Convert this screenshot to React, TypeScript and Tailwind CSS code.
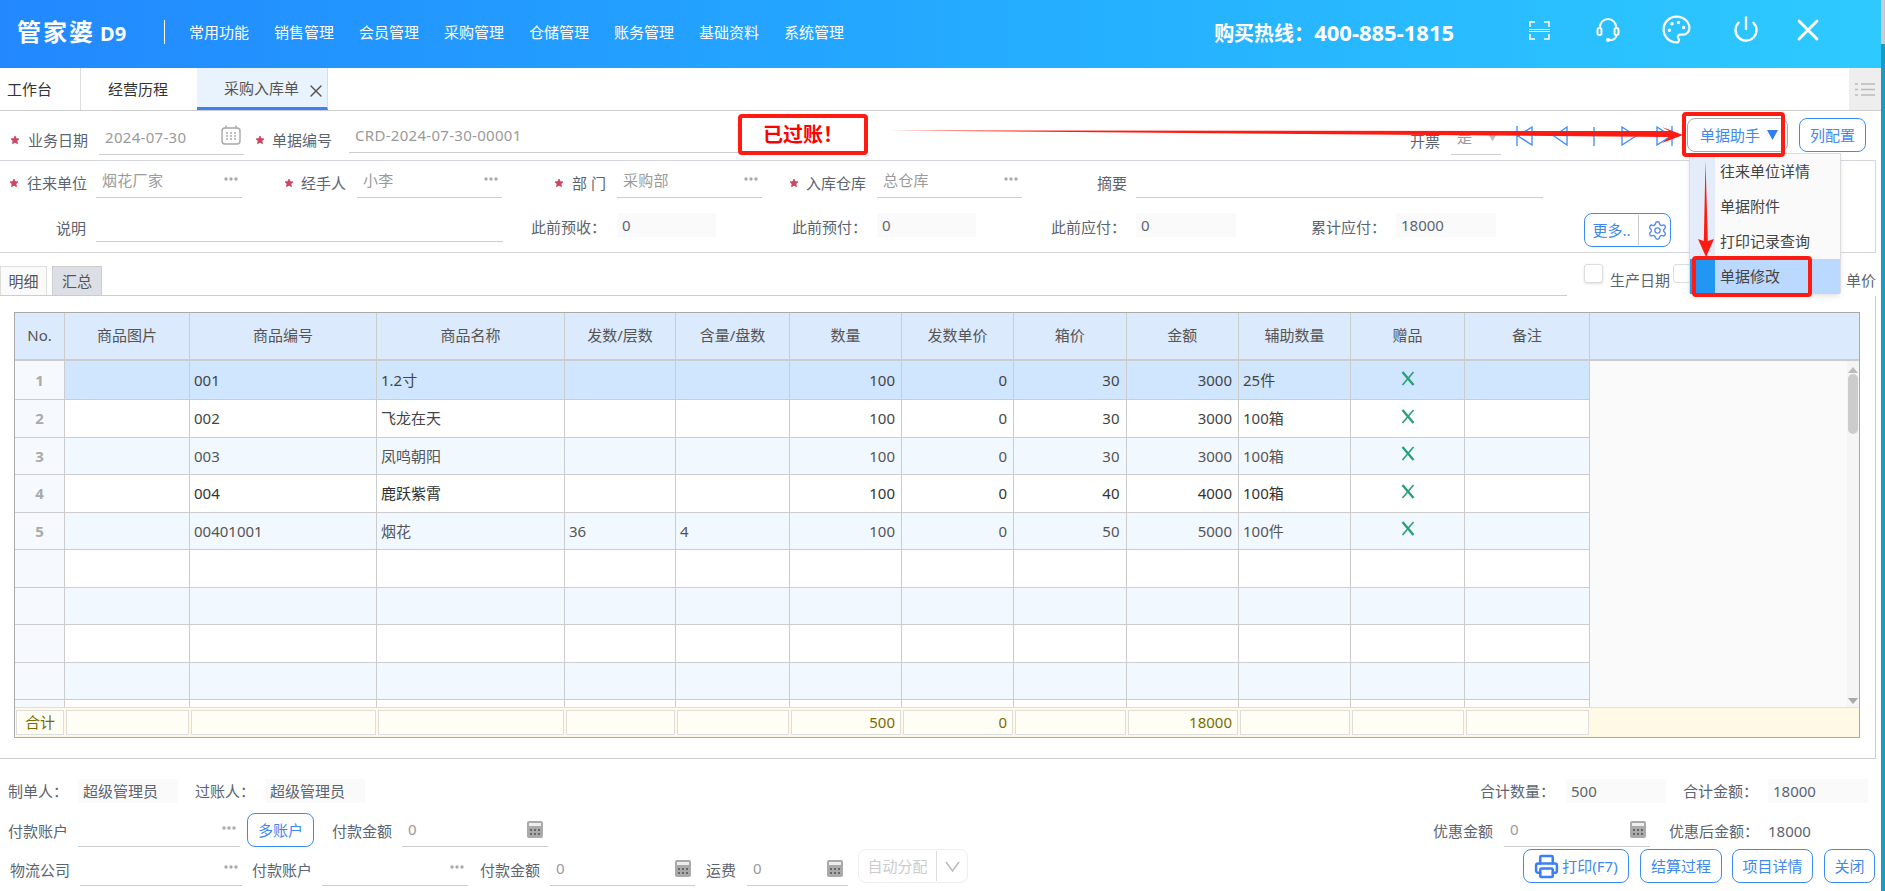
import { Palette, Power, Printer, Settings, X } from 'lucide-react'
import clsx from 'clsx'

const COLS = 'grid grid-cols-[50px_125px_187px_188px_111px_114px_112px_112px_112.5px_112.5px_112px_114px_125px]'

const HEADERS = ['No.', '商品图片', '商品编号', '商品名称', '发数/层数', '含量/盘数', '数量', '发数单价', '箱价', '金额', '辅助数量', '赠品', '备注']
const NAV = ['常用功能', '销售管理', '会员管理', '采购管理', '仓储管理', '账务管理', '基础资料', '系统管理']

const ROWS = [
  { code: '001', name: '1.2寸', a: '', b: '', price: '30', sum: '3000', aux: '25件', tone: 'text-[#444]' },
  { code: '002', name: '飞龙在天', a: '', b: '', price: '30', sum: '3000', aux: '100箱', tone: 'text-[#444]' },
  { code: '003', name: '凤鸣朝阳', a: '', b: '', price: '30', sum: '3000', aux: '100箱', tone: 'text-[#555]' },
  { code: '004', name: '鹿跃紫霄', a: '', b: '', price: '40', sum: '4000', aux: '100箱', tone: 'text-[#333]' },
  { code: '00401001', name: '烟花', a: '36', b: '4', price: '50', sum: '5000', aux: '100件', tone: 'text-[#555]' },
]

function Star() {
  return (
    <svg viewBox="0 0 10 10" className="w-[10px] h-[10px] mb-[10px] shrink-0 fill-[#cf4560] stroke-[#cf4560]" strokeWidth="0.8" strokeLinejoin="round">
      <path d="M5 1l1.2 2.6 2.8.3-2.1 1.9.6 2.9L5 7.2 2.5 8.7l.6-2.9L1 3.9l2.8-.3z" />
    </svg>
  )
}

function Lbl({ children, className }: { children: React.ReactNode; className?: string }) {
  return <div className={clsx('h-[20px] leading-[20px] text-[15px] text-[#5b6470] whitespace-nowrap shrink-0', className)}>{children}</div>
}

function Dots() {
  return (
    <svg width="14" height="4" className="shrink-0 mr-[4px] mb-[3px] fill-[#aaa]">
      <circle cx="2" cy="2" r="1.7" />
      <circle cx="7" cy="2" r="1.7" />
      <circle cx="12" cy="2" r="1.7" />
    </svg>
  )
}

function Calc() {
  return (
    <svg width="16" height="17" viewBox="0 0 16 17" className="shrink-0">
      <rect width="16" height="17" rx="2" fill="#aaa" />
      <rect x="2" y="2" width="12" height="3" fill="#eee" />
      <path d="M3 8h2v2H3zM7 8h2v2H7zM11 8h2v2h-2zM3 12h2v2H3zM7 12h2v2H7zM11 12h2v2h-2z" fill="#666" />
    </svg>
  )
}

function CalendarIcon() {
  return (
    <svg width="20" height="20" viewBox="0 0 20 20" className="shrink-0 fill-none stroke-[#a8a8a8] mb-[6px]">
      <rect x="1" y="3" width="18" height="16" rx="3" strokeWidth="1.4" />
      <path d="M5 .5v3M15 .5v3" strokeWidth="1.4" />
      <path d="M5 8h2M9 8h2M13 8h2M5 11h2M9 11h2M13 11h2M5 14h2M9 14h2M13 14h2" strokeWidth="1.5" />
    </svg>
  )
}

function Line({ value, icon, className }: { value?: string; icon?: React.ReactNode; className?: string }) {
  return (
    <div className={clsx('flex items-center justify-between h-[30px] pb-[4px] pl-[6px] border-b border-[#ccc] text-[15px] text-[#9a9a9a] shrink-0', className)}>
      <span className="whitespace-nowrap tracking-[0.3px]">{value}</span>
      {icon}
    </div>
  )
}

function ReadBox({ value, className }: { value: string; className?: string }) {
  return <div className={clsx('h-[24px] leading-[24px] px-[5px] bg-[#fafafa] text-[15px] text-[#5b6470] whitespace-nowrap shrink-0', className)}>{value}</div>
}

function Btn({ children, className }: { children: React.ReactNode; className?: string }) {
  return (
    <div className={clsx('h-[34px] flex items-center justify-center gap-[3px] bg-white border border-[#3b8cf5] rounded-lg text-[15px] text-[#3f88f0] whitespace-nowrap shrink-0', className)}>
      {children}
    </div>
  )
}

function GreenX() {
  return (
    <svg width="14" height="15" viewBox="0 0 14 15" className="mb-[4px]">
      <path d="M1.5 1L12.5 14" stroke="#2aa076" strokeWidth="2.4" />
      <path d="M12.5 1L1.5 14" stroke="#2aa076" strokeWidth="1.6" />
    </svg>
  )
}

function Header() {
  return (
    <div className="h-[68px] flex items-start bg-gradient-to-r from-[#2388fe] to-[#2ecaff] text-white">
      <div className="w-[107px] ml-[17px] mt-[18px] flex items-baseline font-bold whitespace-nowrap">
        <span className="text-[24px] leading-[28px] tracking-[2px]">管家婆</span>
        <span className="ml-[5px] text-[20px] leading-[28px]">D9</span>
      </div>
      <div className="w-px h-[24px] ml-[40px] mt-[20px] bg-white" />
      <div className="flex gap-[25px] ml-[24px] mt-[21px]">
        {NAV.map(n => (
          <span key={n} className="text-[15px] leading-[22px] whitespace-nowrap">{n}</span>
        ))}
      </div>
      <div className="ml-[370px] mt-[17px] w-[241px] text-[20px] leading-[30px] font-bold whitespace-nowrap">
        购买热线：<span className="text-[22px]">400-885-1815</span>
      </div>
      <svg width="21" height="19" viewBox="0 0 21 19" className="ml-[74px] mt-[21px] fill-none stroke-white" strokeWidth="1.5">
        <path d="M1 6V1h5M15 1h5v5M1 13v5h5M15 18h5v-5" />
        <path d="M0 8.5h21M0 10.5h21" strokeWidth="1" />
      </svg>
      <svg width="24" height="24" viewBox="0 0 24 24" className="ml-[46px] mt-[18px] fill-none stroke-white" strokeWidth="2">
        <path d="M4 11V9a8 8 0 0 1 16 0v2" />
        <rect x="1.5" y="10" width="4" height="7" rx="2" />
        <rect x="18.5" y="10" width="4" height="7" rx="2" />
        <path d="M20.5 17c0 3-3 5-6 5h-2" />
        <circle cx="12" cy="22" r="1" />
      </svg>
      <Palette size={31} strokeWidth={1.7} className="ml-[41px] mt-[14px]" />
      <Power size={28} strokeWidth={2} className="ml-[40px] mt-[15px]" />
      <X size={36} strokeWidth={1.9} className="ml-[30px] mt-[12px]" />
    </div>
  )
}

function TabBar() {
  return (
    <div className="h-[43px] flex border-b border-[#ccc] text-[15px] text-[#333]">
      <div className="w-[81px] pl-[7px] leading-[42px] border-r border-[#ddd]">工作台</div>
      <div className="w-[116px] pl-[27px] leading-[42px]">经营历程</div>
      <div className="w-[131px] h-[42px] flex items-start pl-[27px] bg-[#e8f3fe] border-b-[3px] border-[#4180f0] border-r border-r-[#ddd] text-[#555] leading-[40px]">
        采购入库单
        <X size={20} strokeWidth={1.7} className="ml-[7px] mt-[13px] text-[#555]" />
      </div>
      <div className="ml-auto w-[32px] h-[42px] bg-[#eee] flex items-center justify-center">
        <svg width="20" height="13" viewBox="0 0 20 13" className="stroke-[#bbb]" strokeWidth="1.3">
          <path d="M0 1h3M6 1h14M0 6.5h3M6 6.5h14M0 12h3M6 12h14" />
        </svg>
      </div>
    </div>
  )
}

function NavTriangles() {
  return (
    <svg width="157" height="20" viewBox="0 0 157 20" className="mb-[9px] shrink-0 fill-none stroke-[#3b8cf5]" strokeWidth="1.3">
      <path d="M1 0v20M16 1L2 10l14 9z" />
      <path d="M51 1L38 10l13 9z" />
      <path d="M78 1v19" />
      <path d="M106 1l14 9-14 9z" />
      <path d="M141 1l14 9-14 9zM156 0v20" />
    </svg>
  )
}

function FormTop() {
  return (
    <>
      <div className="w-[1876px] h-[50px] pb-[5px] pl-[10px] flex items-end border-b border-[#d5d5dc]">
        <Star />
        <Lbl className="ml-[8px] mb-[5px] w-[60px]">业务日期</Lbl>
        <Line className="ml-[11px] w-[145px]" value="2024-07-30" icon={<span className="mr-[3px]"><CalendarIcon /></span>} />
        <div className="ml-[11px]"><Star /></div>
        <Lbl className="ml-[7px] mb-[5px] w-[60px]">单据编号</Lbl>
        <Line className="ml-[17px] mb-[2px] w-[400px]" value="CRD-2024-07-30-00001" />
        <div className="ml-auto mr-[10px] flex items-end">
          <Lbl className="mb-[4px] w-[31px]">开票</Lbl>
          <Line className="ml-[10px] w-[50px]" value="是" icon={<span className="text-[9px] mr-[4px] text-[#bbb]">▼</span>} />
          <div className="ml-[15px]"><NavTriangles /></div>
          <Btn className="ml-[14px] mb-[3px] w-[101px] !border-[#aaa] !justify-start pl-[12px]">
            单据助手
            <svg width="11" height="10" viewBox="0 0 11 10" className="ml-[4px] fill-[#2f7ff0]"><path d="M0 0h11L5.5 10z" /></svg>
          </Btn>
          <Btn className="ml-[11px] mb-[3px] w-[67px]">列配置</Btn>
        </div>
      </div>

      <div className="w-[1876px] h-[92px] border-b border-r border-[#d5d5dc]">
        <div className="h-[37px] pl-[9px] flex items-end">
          <Star />
          <Lbl className="ml-[8px] mb-[5px] w-[60px]">往来单位</Lbl>
          <Line className="ml-[9px] w-[146px]" value="烟花厂家" icon={<Dots />} />
          <div className="ml-[42px]"><Star /></div>
          <Lbl className="ml-[7px] mb-[5px] w-[46px]">经手人</Lbl>
          <Line className="ml-[10px] w-[145px]" value="小李" icon={<Dots />} />
          <div className="ml-[52px]"><Star /></div>
          <Lbl className="ml-[8px] mb-[5px] w-[34px]">部 门</Lbl>
          <Line className="ml-[11px] w-[145px]" value="采购部" icon={<Dots />} />
          <div className="ml-[27px]"><Star /></div>
          <Lbl className="ml-[7px] mb-[5px] w-[61px]">入库仓库</Lbl>
          <Line className="ml-[10px] w-[145px]" value="总仓库" icon={<Dots />} />
          <Lbl className="ml-[75px] mb-[5px] w-[30px]">摘要</Lbl>
          <Line className="ml-[9px] w-[407px]" />
        </div>
        <div className="h-[44px] pl-[56px] flex items-end">
          <Lbl className="mb-[4px] w-[30px]">说明</Lbl>
          <Line className="ml-[10px] !h-[28px] w-[407px]" />
          <Lbl className="ml-[28px] mb-[5px] w-[67px]">此前预收：</Lbl>
          <ReadBox className="ml-[19px] mb-[5px] w-[99px]" value="0" />
          <Lbl className="ml-[76px] mb-[5px] w-[67px]">此前预付：</Lbl>
          <ReadBox className="ml-[18px] mb-[5px] w-[99px]" value="0" />
          <Lbl className="ml-[75px] mb-[5px] w-[66px]">此前应付：</Lbl>
          <ReadBox className="ml-[19px] mb-[5px] w-[100px]" value="0" />
          <Lbl className="ml-[75px] mb-[5px] w-[67px]">累计应付：</Lbl>
          <ReadBox className="ml-[18px] mb-[5px] w-[100px]" value="18000" />
          <Btn className="ml-[88px] mb-[-5px] w-[87px] !justify-start">
            <span className="w-[54px] text-center border-r border-[#ccc] leading-[30px]">更多..</span>
            <Settings size={21} strokeWidth={1.6} className="ml-[5px] text-[#5b8cf0]" />
          </Btn>
        </div>
      </div>
    </>
  )
}

function SubTabs() {
  return (
    <div className="h-[43px] flex">
      <div className="w-[1567px] border-b border-[#ccc] flex items-end">
        <div className="w-[47px] h-[29px] leading-[28px] text-center text-[15px] text-[#555] bg-[#fafafa] border border-b-0 border-[#ddd]">明细</div>
        <div className="w-[50px] h-[29px] ml-[5px] leading-[28px] text-center text-[15px] text-[#555] bg-[#dcdfe6] border border-b-0 border-[#ccc]">汇总</div>
      </div>
      <div className="ml-[17px] mt-[11px] w-[19px] h-[19px] bg-white border border-[#ddd] rounded-[3px] shadow-sm shrink-0" />
      <Lbl className="ml-[7px] mt-[17px] w-[59px]">生产日期</Lbl>
      <div className="ml-[4px] mt-[11px] w-[19px] h-[19px] bg-white border border-[#ddd] rounded-[3px] shrink-0" />
      <Lbl className="ml-[154px] mt-[17px] w-[30px]">单价</Lbl>
    </div>
  )
}

function Table() {
  const blanks = Array.from({ length: 5 })
  return (
    <div className="ml-[14px] w-[1846px] border border-[#aaa]">
      <div className="flex h-[48px] border-b-2 border-[#ccc] bg-[#dceafd] text-[15px] text-[#555]">
        <div className={clsx(COLS, 'shrink-0')}>
          {HEADERS.map(h => (
            <div key={h} className="flex items-center justify-center pb-[2px] border-r border-[#ccc] whitespace-nowrap">{h}</div>
          ))}
        </div>
      </div>

      <div className="flex h-[346px]">
        <div className="w-[1575px] shrink-0 overflow-hidden">
          {ROWS.map((r, i) => (
            <div
              key={r.code}
              className={clsx(COLS, 'border-b border-[#ccc] text-[15px]', r.tone, i === 0 ? 'h-[39px] bg-[#d0e5fe]' : 'h-[37.5px]', i === 1 || i === 3 ? 'bg-white' : '', i === 2 || i === 4 ? 'bg-[#f2f8ff]' : '')}
            >
              <div className="flex items-center justify-center font-bold text-[#aaa] bg-[#f6f9fd] border-r border-[#ccc]">{i + 1}</div>
              <div className="border-r border-[#ccc]" />
              <div className="flex items-center pl-[4px] border-r border-[#ccc]">{r.code}</div>
              <div className="flex items-center pl-[4px] border-r border-[#ccc]">{r.name}</div>
              <div className="flex items-center pl-[4px] border-r border-[#ccc]">{r.a}</div>
              <div className="flex items-center pl-[4px] border-r border-[#ccc]">{r.b}</div>
              <div className="flex items-center justify-end pr-[6px] border-r border-[#ccc]">100</div>
              <div className="flex items-center justify-end pr-[6px] border-r border-[#ccc]">0</div>
              <div className="flex items-center justify-end pr-[6px] border-r border-[#ccc]">{r.price}</div>
              <div className="flex items-center justify-end pr-[6px] border-r border-[#ccc]">{r.sum}</div>
              <div className="flex items-center pl-[4px] border-r border-[#ccc]">{r.aux}</div>
              <div className="flex items-center justify-center border-r border-[#ccc]"><GreenX /></div>
              <div className="border-r border-[#ccc]" />
            </div>
          ))}
          {blanks.map((_, i) => (
            <div key={i} className={clsx(COLS, 'h-[37.5px] border-b border-[#ccc]', i % 2 === 0 ? 'bg-white' : 'bg-[#f2f8ff]')}>
              {HEADERS.map((h, j) => (
                <div key={h} className={clsx('border-r border-[#ccc]', j === 0 && 'bg-[#f6f9fd]')} />
              ))}
            </div>
          ))}
        </div>
        <div className="flex-1 flex justify-end bg-[#fafafa]">
          <div className="w-[12px] h-full bg-[#f5f5f5] flex flex-col items-center pt-[6px] pb-[3px]">
            <svg width="10" height="6" viewBox="0 0 10 6" className="fill-[#bbb] shrink-0"><path d="M5 0l5 6H0z" /></svg>
            <div className="w-[10px] h-[60px] mt-[1px] bg-[#ccc] rounded-[5px]" />
            <svg width="10" height="6" viewBox="0 0 10 6" className="fill-[#aaa] mt-auto shrink-0"><path d="M0 0h10L5 6z" /></svg>
          </div>
        </div>
      </div>

      <FooterRow />
    </div>
  )
}

function FooterRow() {
  const vals: Record<number, string> = { 0: '合计', 6: '500', 7: '0', 9: '18000' }
  return (
    <div className="flex h-[30px] pt-[2px] border-t border-[#e8e0c0] bg-[#fff9e5] text-[15px] text-[#7a6c00]">
      <div className={COLS}>
        {HEADERS.map((h, i) => (
          <div
            key={h}
            className={clsx('h-[25px] mx-px bg-[#fffef5] border border-[#ddd] flex items-center', i === 0 ? 'justify-center' : 'justify-end pr-[5px]')}
          >
            {vals[i]}
          </div>
        ))}
      </div>
    </div>
  )
}

function Bottom() {
  return (
    <div className="text-[15px]">
      <div className="mt-[20px] h-[24px] flex justify-between">
        <div className="pl-[8px] flex items-center">
          <Lbl className="w-[52px]">制单人：</Lbl>
          <ReadBox className="ml-[18px] w-[100px]" value="超级管理员" />
          <Lbl className="ml-[17px] w-[52px]">过账人：</Lbl>
          <ReadBox className="ml-[18px] w-[100px]" value="超级管理员" />
        </div>
        <div className="mr-[13px] flex items-center">
          <Lbl className="w-[67px]">合计数量：</Lbl>
          <ReadBox className="ml-[19px] w-[100px]" value="500" />
          <Lbl className="ml-[17px] w-[67px]">合计金额：</Lbl>
          <ReadBox className="ml-[18px] w-[100px]" value="18000" />
        </div>
      </div>

      <div className="mt-[10px] h-[34px] flex justify-between items-end">
        <div className="pl-[8px] flex items-end">
          <Lbl className="mb-[6px] w-[60px]">付款账户</Lbl>
          <Line className="ml-[10px] w-[162px]" icon={<Dots />} />
          <Btn className="ml-[7px] w-[67px]">多账户</Btn>
          <Lbl className="ml-[18px] mb-[6px] w-[60px]">付款金额</Lbl>
          <Line className="ml-[10px] w-[146px] pr-[5px]" value="0" icon={<Calc />} />
        </div>
        <div className="mr-[13px] flex items-end">
          <Lbl className="mb-[6px] w-[61px]">优惠金额</Lbl>
          <Line className="ml-[10px] w-[146px] pr-[4px]" value="0" icon={<Calc />} />
          <Lbl className="ml-[19px] mb-[6px] w-[81px]">优惠后金额：</Lbl>
          <div className="ml-[18px] mb-[6px] w-[100px] h-[20px] leading-[20px] text-[#5b6470]">18000</div>
        </div>
      </div>

      <div className="mt-[2px] h-[34px] flex justify-between items-end">
        <div className="pl-[10px] flex items-end">
          <Lbl className="mb-[3px] w-[60px]">物流公司</Lbl>
          <Line className="ml-[10px] mb-[-3px] w-[162px]" icon={<Dots />} />
          <Lbl className="ml-[10px] mb-[3px] w-[61px]">付款账户</Lbl>
          <Line className="ml-[9px] mb-[-3px] w-[146px]" icon={<Dots />} />
          <Lbl className="ml-[12px] mb-[3px] w-[60px]">付款金额</Lbl>
          <Line className="ml-[10px] mb-[-3px] w-[145px] pr-[4px]" value="0" icon={<Calc />} />
          <Lbl className="ml-[11px] mb-[3px] w-[30px]">运费</Lbl>
          <Line className="ml-[11px] mb-[-3px] w-[101px] pr-[5px]" value="0" icon={<Calc />} />
          <div className="ml-[10px] w-[110px] h-[34px] flex items-center border border-[#eee] rounded-lg text-[#ccc]">
            <span className="w-[78px] text-center border-r border-[#ddd] leading-[30px]">自动分配</span>
            <svg width="15" height="11" viewBox="0 0 15 11" className="ml-[8px] fill-none stroke-[#bbb]" strokeWidth="1.5"><path d="M1 1l6.5 9L14 1" /></svg>
          </div>
        </div>
        <div className="mr-[6px] flex items-end">
          <Btn className="w-[106px]">
            <Printer size={25} strokeWidth={2.4} className="text-[#3b7ff5]" />
            打印(F7)
          </Btn>
          <Btn className="ml-[11px] w-[82px]">结算过程</Btn>
          <Btn className="ml-[10px] w-[81px]">项目详情</Btn>
          <Btn className="ml-[11px] w-[51px]">关闭</Btn>
        </div>
      </div>
    </div>
  )
}

// red marks and the open menu, both drawn over the page
function Overlays() {
  return (
    <>
      <div className="absolute left-[738px] top-[114px] w-[130px] h-[41px] flex items-center justify-center bg-white border-4 border-[#ff1a12] rounded-[4px] text-[20px] font-bold text-[#f00]">
        已过账！
      </div>
      <svg width="800" height="30" viewBox="0 0 800 30" className="absolute left-[885px] top-[120px] fill-[#ff1a12]">
        <path d="M3 10.5L784 11 777 7 798 15 777 23 784 17z" />
      </svg>

      <div className="absolute left-[1689px] top-[153px] w-[152px] h-[140px] bg-[#fafafa] border border-[#ddd] shadow-md text-[15px] text-[#444]">
        <div className="absolute left-0 top-0 bottom-0 w-[25px] bg-[#e3ecf8]" />
        {['往来单位详情', '单据附件', '打印记录查询'].map(t => (
          <div key={t} className="relative h-[35px] leading-[35px] pl-[30px]">{t}</div>
        ))}
        <div className="relative h-[35px] leading-[35px] pl-[30px] bg-[#bbd9ff]">
          <div className="absolute left-0 top-0 bottom-0 w-[25px] bg-[#2196f3]" />
          单据修改
        </div>
      </div>

      <div className="absolute left-[1682px] top-[112px] w-[103px] h-[45px] border-4 border-[#ff1a12] rounded-[4px]" />
      <div className="absolute left-[1692px] top-[256px] w-[120px] h-[41px] border-4 border-[#ff1a12] rounded-[4px]" />
      <svg width="20" height="96" viewBox="0 0 20 96" className="absolute left-[1696px] top-[161px] fill-[#ff1a12]">
        <path d="M9.5 0L11.8 80 18 78 10 96 2 78 7.8 80z" />
      </svg>
    </>
  )
}

export default function App() {
  return (
    <div className="relative w-[1885px] h-[891px] overflow-hidden flex bg-white [font-family:'Noto_Sans','Noto_Sans_CJK_SC',sans-serif]">
      <div className="w-[1881px] shrink-0">
        <Header />
        <TabBar />
        <FormTop />
        <SubTabs />
        <div className="w-[1876px] pt-[16px] pb-[20px] border-b border-r border-[#ccc]">
          <Table />
        </div>
        <Bottom />
      </div>
      <div className="flex-1 flex flex-col bg-[#1a9bc0]">
        <div className="h-[44px] bg-[#ccc]" />
      </div>
      <Overlays />
    </div>
  )
}
